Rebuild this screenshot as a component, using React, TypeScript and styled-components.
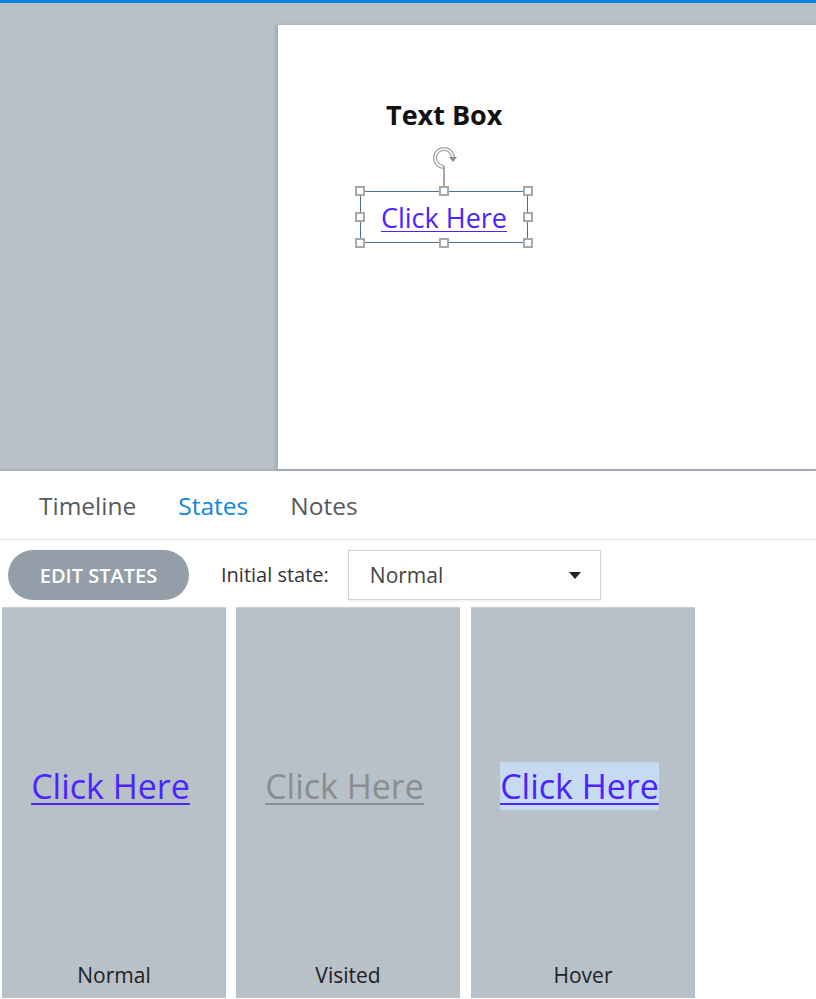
import React from "react";
import styled, { createGlobalStyle } from "styled-components";

const Global = createGlobalStyle`
  html, body { margin: 0; padding: 0; background: #ffffff; overflow: hidden; }
  body { font-family: "Open Sans", "Noto Sans", sans-serif; }
`;

const Page = styled.div`
  width: 816px;
  height: 999px;
  display: flex;
  flex-direction: column;
  overflow: hidden;
`;

const TopBar = styled.div`
  height: 3px;
  background: #0a84dc;
  flex: none;
`;

const Stage = styled.div`
  height: 444px;
  flex: none;
  background: #b8c0c8;
  padding: 22px 0 0 278px;
  display: flex;
  border-bottom: 2px solid #a9aeba;
`;

const Canvas = styled.div`
  position: relative;
  flex: 1;
  background: #ffffff;
  box-shadow: -2px 0 3px rgba(90, 100, 115, 0.25);
`;

const Heading = styled.div`
  position: absolute;
  left: 108px;
  top: 72px;
  font-family: "Open Sans", sans-serif;
  font-weight: 700;
  font-size: 27px;
  line-height: 36px;
  color: #111;
`;

const Selection = styled.div`
  position: absolute;
  left: 82px;
  top: 166px;
  width: 166px;
  height: 50px;
  border: 1px solid #50708e;
  display: flex;
  align-items: center;
  justify-content: center;
`;

const CanvasLink = styled.span`
  font-family: "Open Sans", sans-serif;
  font-size: 27px;
  line-height: 34px;
  color: #4b24ff;
  text-decoration: underline;
  text-underline-offset: 3px;
  text-decoration-thickness: 1px;
  margin-top: 1px;
`;

const Handle = styled.div<{ $x: number; $y: number }>`
  position: absolute;
  left: ${(p) => p.$x}px;
  top: ${(p) => p.$y}px;
  width: 6px;
  height: 6px;
  border: 2px solid #a8a8a8;
  background: #ffffff;
  transform: translate(-50%, -50%);
`;

const RotateIcon = styled.svg`
  position: absolute;
  left: 152px;
  top: 120px;
`;

const Tabs = styled.div`
  height: 68px;
  flex: none;
  display: flex;
  align-items: center;
  gap: 42px;
  padding: 0 0 0 39px;
  border-bottom: 1px solid #e2e4e8;
`;

const Tab = styled.div<{ $active?: boolean }>`
  font-family: "Open Sans", sans-serif;
  font-size: 24.5px;
  color: ${(p) => (p.$active ? "#1088d8" : "#555a60")};
`;

const Toolbar = styled.div`
  height: 67px;
  flex: none;
  display: flex;
  align-items: flex-start;
  padding: 10px 0 0 8px;
  box-sizing: border-box;
`;

const EditButton = styled.button`
  width: 181px;
  height: 50px;
  border: none;
  border-radius: 25px;
  background: #939ea8;
  color: #ffffff;
  font-family: "Open Sans", sans-serif;
  font-weight: 600;
  font-size: 20px;
  padding: 0;
`;

const Label = styled.span`
  margin-left: 32px;
  font-family: "Open Sans", sans-serif;
  font-size: 20px;
  line-height: 50px;
  color: #333;
`;

const Select = styled.div`
  margin-left: 19px;
  width: 211px;
  height: 48px;
  border: 1px solid #ccd3da;
  box-shadow: 0 1px 2px rgba(0, 0, 0, 0.08);
  display: flex;
  align-items: center;
  justify-content: space-between;
  padding: 0 19px 0 21px;
`;

const SelectText = styled.span`
  font-family: "Open Sans", sans-serif;
  font-size: 21px;
  color: #444;
`;

const Caret = styled.span`
  width: 0;
  height: 0;
  border-left: 6px solid transparent;
  border-right: 6px solid transparent;
  border-top: 7px solid #222;
`;

const Cards = styled.div`
  flex: none;
  display: flex;
  gap: 10px;
  padding-left: 2px;
`;

const Card = styled.div`
  width: 224px;
  height: 391px;
  background: #b8c0c8;
  border-top: 1px solid #c8cfd6;
  display: flex;
  flex-direction: column;
  box-sizing: border-box;
  &:nth-child(3) { margin-left: 1px; }
`;

const CardBody = styled.div`
  flex: 1;
  display: flex;
  align-items: center;
  justify-content: center;
  padding-right: 7px;
`;

const StateLink = styled.span<{ $color: string; $hl?: boolean }>`
  font-family: "Open Sans", sans-serif;
  font-size: 34px;
  line-height: 48px;
  color: ${(p) => p.$color};
  background: ${(p) => (p.$hl ? "#c6daf2" : "transparent")};
  text-decoration: underline;
  text-underline-offset: 4px;
  text-decoration-thickness: 2px;
  margin-top: 1px;
`;

const CardLabel = styled.div`
  height: 24px;
  padding-bottom: 11px;
  text-align: center;
  font-family: "Open Sans", sans-serif;
  font-size: 21px;
  line-height: 24px;
  color: #222;
`;

const handles: [number, number][] = [
  [82, 166], [166, 166], [250, 166],
  [82, 192], [250, 192],
  [82, 218], [166, 218], [250, 218],
];

const states = [
  { name: "Normal", color: "#4b24ff" },
  { name: "Visited", color: "#8a8d90" },
  { name: "Hover", color: "#4b24ff", hl: true },
];

const arc = "M14 22 A9 9 0 1 1 23 13";

export default function App() {
  return (
    <Page>
      <Global />
      <TopBar />
      <Stage>
        <Canvas>
          <Heading>Text Box</Heading>
          <RotateIcon width="32" height="44" viewBox="0 0 32 44">
            <path d={arc} fill="none" stroke="#a6a6a6" strokeWidth="4" />
            <path d={arc} fill="none" stroke="#ffffff" strokeWidth="1.5" />
            <path d="M19 12 L27 12 L23 17 Z" fill="#8a8a8a" />
            <line x1="14" y1="21" x2="14" y2="43" stroke="#a6a6a6" strokeWidth="2" />
          </RotateIcon>
          <Selection>
            <CanvasLink>Click Here</CanvasLink>
          </Selection>
          {handles.map(([x, y], i) => (
            <Handle key={i} $x={x} $y={y} />
          ))}
        </Canvas>
      </Stage>
      <Tabs>
        <Tab>Timeline</Tab>
        <Tab $active>States</Tab>
        <Tab>Notes</Tab>
      </Tabs>
      <Toolbar>
        <EditButton>EDIT STATES</EditButton>
        <Label>Initial state:</Label>
        <Select>
          <SelectText>Normal</SelectText>
          <Caret />
        </Select>
      </Toolbar>
      <Cards>
        {states.map((s) => (
          <Card key={s.name}>
            <CardBody>
              <StateLink $color={s.color} $hl={s.hl}>
                Click Here
              </StateLink>
            </CardBody>
            <CardLabel>{s.name}</CardLabel>
          </Card>
        ))}
      </Cards>
    </Page>
  );
}
